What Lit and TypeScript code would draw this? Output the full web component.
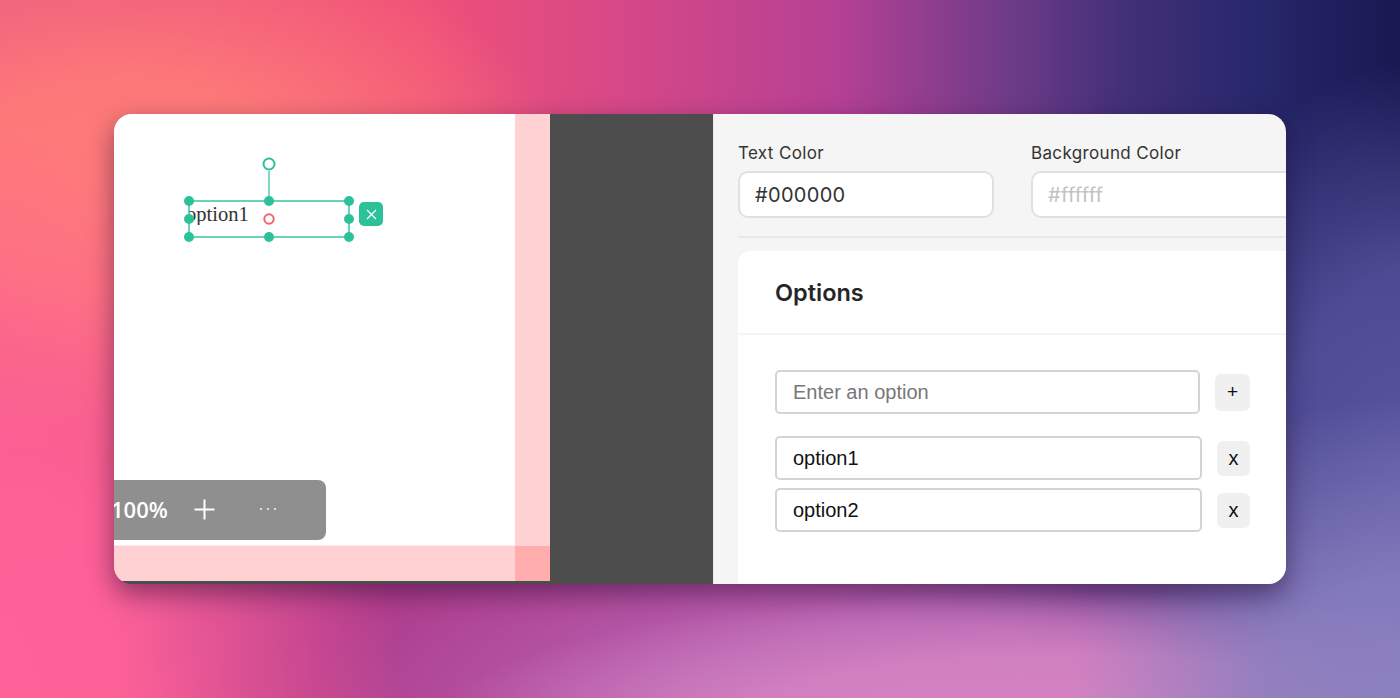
import { LitElement, html, css, svg } from "lit";
import { customElement } from "lit/decorators.js";

const handles: [number, number][] = [
  [75, 87], [155, 87], [235, 87],
  [75, 105], [235, 105],
  [75, 123], [155, 123], [235, 123],
];

@customElement("app-root")
export class AppRoot extends LitElement {
  static styles = css`
    :host {
      display: block;
      width: 1400px;
      height: 698px;
      overflow: hidden;
      font-family: "Inter", "Liberation Sans", sans-serif;
    }
    .stage {
      width: 100%;
      height: 100%;
      box-sizing: border-box;
      padding: 114px;
      background:
        radial-gradient(ellipse 330px 300px at 1400px 698px, #8a80c0 0%, rgba(138, 128, 192, 0.85) 40%, rgba(138, 128, 192, 0) 100%),
        radial-gradient(ellipse 620px 130px at 1060px 720px, #d684c2 0%, rgba(214, 132, 194, 0.85) 50%, rgba(214, 132, 194, 0) 100%),
        radial-gradient(ellipse 280px 420px at 1420px 480px, #5a57a2 0%, rgba(90, 87, 162, 0.8) 50%, rgba(90, 87, 162, 0) 100%),
        radial-gradient(ellipse 400px 560px at 0px 680px, #ff6298 0%, rgba(255, 98, 152, 0.95) 30%, rgba(255, 98, 152, 0) 100%),
        radial-gradient(ellipse 440px 270px at 130px 190px, #ff7c78 0%, rgba(255, 124, 120, 0.9) 40%, rgba(255, 124, 120, 0) 100%),
        radial-gradient(ellipse 620px 240px at 920px 720px, #b465b4 0%, rgba(180, 101, 180, 0.9) 40%, rgba(180, 101, 180, 0) 100%),
        radial-gradient(ellipse 460px 170px at 420px 640px, #ae3c8e 0%, rgba(174, 60, 142, 0.9) 55%, rgba(174, 60, 142, 0) 100%),
        linear-gradient(90deg, #ea5882 0%, #f05078 30%, #d54888 45%, #b54094 60%, #6f3b88 72%, #433079 80%, #27276b 90%, #181852 100%);
    }
    .window {
      display: flex;
      width: 1172px;
      height: 470px;
      border-radius: 18px;
      overflow: hidden;
      background: #4d4d4d;
      box-shadow: 0 10px 26px rgba(40, 10, 50, 0.5);
    }
    .left {
      flex: 0 0 436px;
      height: 467px;
      display: grid;
      grid-template-columns: 401px 35px;
      grid-template-rows: 432px 35px;
      background: #ffd1d3;
    }
    .canvas {
      position: relative;
      background: #fff;
      overflow: hidden;
      box-sizing: border-box;
      border-bottom: 1px solid #fbe9ea;
    }
    .strip-v { background: #ffd1d3; }
    .strip-h { background: #ffd1d3; }
    .corner { background: #ffadad; }
    .selection {
      position: absolute;
      left: 0;
      top: 0;
      width: 401px;
      height: 140px;
    }
    .label {
      position: absolute;
      left: 75px;
      top: 89px;
      font-family: "Liberation Serif", serif;
      font-size: 20.5px;
      line-height: 22px;
      color: #333;
      white-space: nowrap;
      width: 160px;
      overflow: hidden;
      text-indent: -3px;
    }
    .close {
      position: absolute;
      left: 245px;
      top: 88px;
      width: 24px;
      height: 24px;
      border-radius: 5px;
      background: #2dc19a;
      display: flex;
      align-items: center;
      justify-content: center;
    }
    .zoombar {
      position: absolute;
      left: 0;
      top: 366px;
      width: 212px;
      height: 60px;
      border-radius: 0 8px 8px 0;
      background: #8f8f8f;
      color: #fff;
      display: flex;
      align-items: center;
      font-family: "Open Sans", "Liberation Sans", sans-serif;
    }
    .pct {
      font-size: 22px;
      font-weight: 550;
      margin-left: -3px;
      margin-bottom: 2px;
      width: 72px;
      white-space: nowrap;
    }
    .plus {
      width: 21px;
      height: 21px;
      display: block;
      margin-left: 10.5px;
      margin-bottom: 2px;
    }
    .dots {
      margin-left: 45.5px;
      margin-bottom: 2px;
      display: flex;
      gap: 5px;
    }
    .dots i {
      width: 2px;
      height: 2px;
      border-radius: 50%;
      background: #f4f4f4;
    }
    .divider { flex: 0 0 164px; }
    .right {
      flex: 1;
      min-width: 0;
      height: 470px;
      box-sizing: border-box;
      background: #f5f5f5;
      padding: 28px 0 0 24px;
      overflow: hidden;
      border-left: 1px solid #e8e8e8;
      margin-left: -1px;
    }
    .colors {
      display: flex;
      gap: 37px;
      width: 600px;
    }
    .field { flex: 0 0 256px; }
    .field + .field { flex: 0 0 300px; }
    .field label {
      display: block;
      font-size: 17px;
      line-height: 20px;
      color: #333;
      margin-bottom: 9px;
      margin-top: 1px;
      margin-bottom: 8px;
      letter-spacing: 0.35px;
    }
    .color-input {
      height: 47px;
      box-sizing: border-box;
      border: 2px solid #e0e0e0;
      border-radius: 10px;
      background: #fff;
      padding: 0 15px;
      display: flex;
      align-items: center;
      font-size: 20px;
      color: #333;
      letter-spacing: 0.3px;
    }
    .color-input.ph { color: #c2c2c2; }
    hr {
      border: 0;
      height: 2px;
      background: #e9e9e9;
      margin: 18px 0 13px;
    }
    .card {
      background: #fff;
      border-radius: 12px 0 0 0;
      height: 400px;
    }
    .card-title {
      height: 84px;
      box-sizing: border-box;
      padding-left: 37px;
      display: flex;
      align-items: center;
      font-size: 23.5px;
      font-weight: 600;
      color: #262626;
      border-bottom: 2px solid #f5f5f5;
    }
    .card-body {
      padding: 35px 36px 0 37px;
      font-family: "Liberation Sans", sans-serif;
    }
    .row {
      display: flex;
      align-items: center;
    }
    .row.add { margin-bottom: 22px; }
    .row.opt + .row.opt { margin-top: 8px; }
    .text {
      box-sizing: border-box;
      height: 44px;
      border: 2px solid #d4d4d4;
      border-radius: 5px;
      padding: 0 16px;
      display: flex;
      align-items: center;
      font-size: 20px;
      color: #111;
      background: #fff;
    }
    .add .text { flex: 0 0 425px; color: #777; }
    .opt .text { flex: 0 0 427px; }
    .btn {
      background: #f0f0f0;
      border-radius: 6px;
      display: flex;
      align-items: center;
      justify-content: center;
      color: #111;
    }
    .add .btn { width: 36px; height: 37px; margin-left: 15px; font-size: 19px; }
    .opt .btn { width: 34px; height: 35px; margin-left: 15px; font-size: 20px; }
  `;

  private overlay() {
    return svg`
      <line x1="155" y1="57" x2="155" y2="87" stroke="#7fd8c0" stroke-width="2"></line>
      <circle cx="155" cy="50" r="5.5" fill="#fff" stroke="#2dc19a" stroke-width="2"></circle>
      <rect x="75" y="87" width="160" height="36" fill="none" stroke="#2dc19a" stroke-width="1.4"></rect>
      ${handles.map(([x, y]) => svg`<circle cx=${x} cy=${y} r="5" fill="#2dc19a"></circle>`)}
      <circle cx="155" cy="105" r="4.7" fill="#fff" stroke="#ee6470" stroke-width="2"></circle>
    `;
  }

  render() {
    return html`
      <div class="stage">
        <div class="window">
          <div class="left">
            <div class="canvas">
              <div class="label">option1</div>
              <svg class="selection" viewBox="0 0 401 140">${this.overlay()}</svg>
              <div class="close">
                <svg width="13" height="13" viewBox="0 0 13 13" fill="none" stroke="#fff" stroke-width="1.2">
                  <path d="M2 2l9 9M11 2l-9 9"></path>
                </svg>
              </div>
              <div class="zoombar">
                <span class="pct">100%</span>
                <svg class="plus" viewBox="0 0 21 21" fill="none" stroke="#fff" stroke-width="2">
                  <path d="M10.500 0.500v20M0.500 10.500h20"></path>
                </svg>
                <span class="dots"><i></i><i></i><i></i></span>
              </div>
            </div>
            <div class="strip-v"></div>
            <div class="strip-h"></div>
            <div class="corner"></div>
          </div>
          <div class="divider"></div>
          <div class="right">
            <div class="colors">
              <div class="field">
                <label>Text Color</label>
                <div class="color-input">#000000</div>
              </div>
              <div class="field">
                <label>Background Color</label>
                <div class="color-input ph">#ffffff</div>
              </div>
            </div>
            <hr />
            <div class="card">
              <div class="card-title">Options</div>
              <div class="card-body">
                <div class="row add">
                  <div class="text">Enter an option</div>
                  <div class="btn">+</div>
                </div>
                <div class="row opt">
                  <div class="text">option1</div>
                  <div class="btn">x</div>
                </div>
                <div class="row opt">
                  <div class="text">option2</div>
                  <div class="btn">x</div>
                </div>
              </div>
            </div>
          </div>
        </div>
      </div>
    `;
  }
}
